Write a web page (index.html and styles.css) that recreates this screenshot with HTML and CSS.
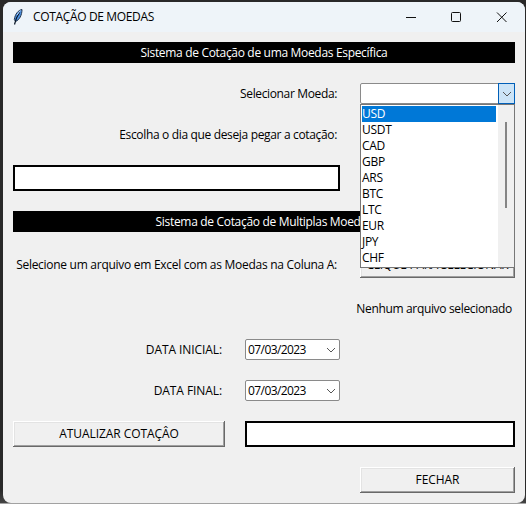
FILE: index.html
```html
<!DOCTYPE html>
<html lang="pt-BR">
<head>
<meta charset="utf-8">
<title>COTAÇÃO DE MOEDAS</title>
<link rel="stylesheet" href="styles.css">
</head>
<body>
<div class="window">
  <header class="titlebar">
    <svg class="feather" width="12" height="18" viewBox="0 0 12 18">
      <path d="M10 1.500C6.500 2 3 6 2.300 11.500L3.500 13.500C7.500 12 10 7 10 1.500Z" fill="#4a8fe0" stroke="#26384f" stroke-width="1"/>
      <path d="M7.800 4C5 8 3.500 12 2.500 16.500" fill="none" stroke="#071526" stroke-width="1.200"/>
      <path d="M8.400 2.500L5 7" stroke="#b5d6ff" stroke-width="1"/>
    </svg>
    <h1 class="title">COTAÇÃO DE MOEDAS</h1>
    <svg class="controls" width="114" height="12" viewBox="0 0 114 12" fill="none" stroke="#111">
      <path d="M1 6.500h10"/>
      <rect x="46.500" y="1.500" width="9" height="9" rx="1"/>
      <path d="M92 1.500l9.500 9.500M101.500 1.500L92 11"/>
    </svg>
  </header>
  <main class="form">
    <div class="banner">Sistema de Cotação de uma Moedas Específica</div>
    <label class="label wide"><span class="t-currency">Selecionar Moeda:</span></label>
    <div class="combo open">
      <span class="arrow"><svg width="10" height="6" viewBox="0 0 10 6"><path d="M1 1l4 4 4-4" fill="none" stroke="#555"/></svg></span>
      <div class="dropdown">
        <ul class="options">
          <li class="selected">USD</li><li>USDT</li><li>CAD</li><li>GBP</li><li>ARS</li>
          <li>BTC</li><li>LTC</li><li>EUR</li><li>JPY</li><li>CHF</li>
        </ul>
        <div class="scrollbar"><div class="thumb"></div></div>
      </div>
    </div>
    <label class="label wide"><span class="t-day">Escolha o dia que deseja pegar a cotação:</span></label>
    <div class="entry wide first"></div>
    <div class="banner">Sistema de Cotação de Multiplas Moedas</div>
    <label class="label wide"><span class="t-file">Selecione um arquivo em Excel com as Moedas na Coluna A:</span></label>
    <button class="button">CLIQUE PARA SELECIONAR</button>
    <div class="label status"><span class="t-none">Nenhum arquivo selecionado</span></div>
    <label class="label narrow"><span class="t-caps">DATA INICIAL:</span></label>
    <div class="combo date"><span class="t-date">07/03/2023</span><svg width="10" height="6" viewBox="0 0 10 6"><path d="M1 1l4 4 4-4" fill="none" stroke="#555"/></svg></div>
    <label class="label narrow"><span class="t-caps">DATA FINAL:</span></label>
    <div class="combo date"><span class="t-date">07/03/2023</span><svg width="10" height="6" viewBox="0 0 10 6"><path d="M1 1l4 4 4-4" fill="none" stroke="#555"/></svg></div>
    <button class="button update"><span class="t-caps">ATUALIZAR COTAÇÂO</span></button>
    <div class="entry result"></div>
    <button class="button close"><span class="t-caps">FECHAR</span></button>
  </main>
</div>
</body>
</html>
```
FILE: styles.css
```css
* { box-sizing: border-box; }
body {
  margin: 0;
  width: 526px;
  height: 505px;
  padding: 2px 1px 2px 3px;
  overflow: hidden;
  background: linear-gradient(#292929 0 490px, #444 503px, #fff 504px);
  color: #000;
  font: 12px/16px "Open Sans", "Noto Sans", sans-serif;
  letter-spacing: -0.3px;
}
.window {
  width: 522px;
  height: 501px;
  border-radius: 8px;
  overflow: hidden;
  background: #f0f0f0;
}
.titlebar {
  display: flex;
  align-items: center;
  height: 30px;
  padding: 0 16px 0 9px;
  background: #eef4f9;
}
.title { margin: 0 auto 0 9px; font-size: 12px; font-weight: 400; white-space: nowrap; letter-spacing: -0.35px; }
.controls { margin-right: -10px; }
.form {
  display: grid;
  grid-template-columns: 212px 95px 155px;
  grid-template-rows: 21px 21px 21px 26px 21px 26px 21px 21px 21px 26px 26px;
  gap: 20px;
  padding: 10px;
}
.banner {
  grid-column: 1 / -1;
  background: #000;
  color: #fff;
  text-align: center;
  line-height: 21px;
  letter-spacing: -0.32px;
}
.label {
  display: flex;
  align-items: center;
  justify-content: flex-end;
  padding-right: 3px;
  white-space: nowrap;
}
.wide { grid-column: 1 / 3; }
.narrow { grid-column: 1; }
.status { grid-column: 3; }
.first { grid-row: 4; }
.entry { border: 2px solid #000; background: #fff; }
.result { grid-column: 2 / 4; }
.t-currency { letter-spacing: -0.36px; }
.t-day { letter-spacing: -0.34px; }
.t-file { letter-spacing: -0.28px; }
.t-none { letter-spacing: -0.34px; }
.t-caps { letter-spacing: -0.08px; }
.t-date { letter-spacing: -0.58px; }
.combo {
  position: relative;
  display: flex;
  align-items: center;
  justify-content: space-between;
  border: 1px solid #8a8a8a;
  border-radius: 2px;
  background: #fff;
}
.date { grid-column: 2; padding: 0 3px 0 2px; }
.open { justify-content: flex-end; }
.arrow {
  display: flex;
  align-items: center;
  justify-content: center;
  width: 17px;
  height: 21px;
  margin: -1px;
  border: 1px solid #005fb8;
  background: #cce4f7;
}
.dropdown {
  position: absolute;
  z-index: 2;
  top: 20px;
  left: -1px;
  display: flex;
  width: 155px;
  height: 164px;
  border: 1px solid #777;
  background: #fff;
}
.options { flex: 1; margin: 1px 2px 0 1px; padding: 0; list-style: none; }
.options li { height: 16px; }
.options .selected { background: #0078d7; color: #fff; }
.scrollbar { width: 16px; padding: 17px 7px 0; background: #f0f0f0; }
.thumb { width: 2px; height: 86px; background: #858585; }
.button {
  padding: 0;
  border: 0;
  background: #f0f0f0;
  color: #000;
  font: inherit;
  letter-spacing: inherit;
  white-space: nowrap;
  box-shadow: inset -1px -1px #696969, inset 1px 1px #fff, inset -2px -2px #a0a0a0, inset 2px 2px #e3e3e3;
}
.update { grid-column: 1; }
.close { grid-column: 3; }
```
